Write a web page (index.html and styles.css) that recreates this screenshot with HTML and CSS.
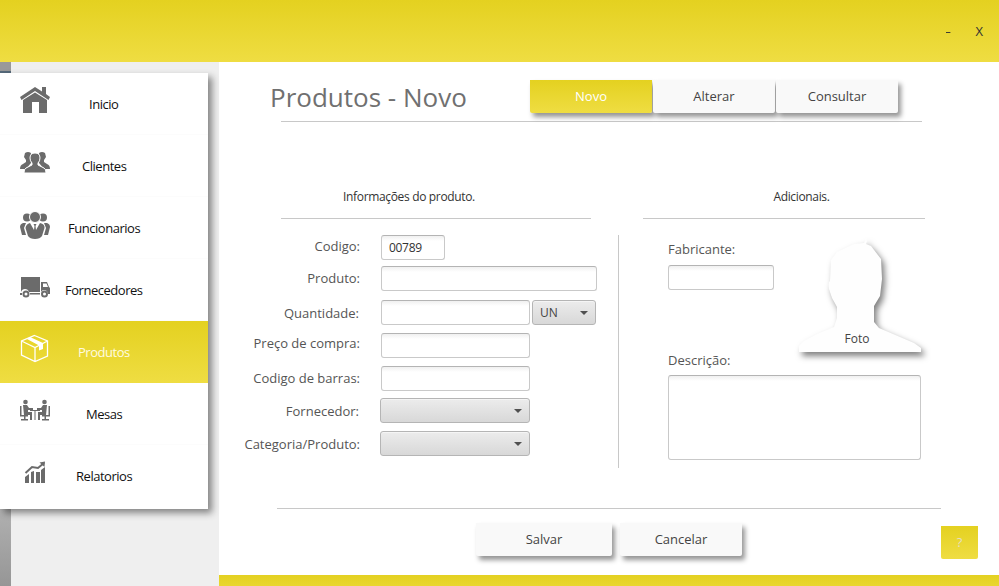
FILE: index.html
```
<!DOCTYPE html>
<html lang="pt-BR">
<head>
<meta charset="utf-8">
<title>Produtos - Novo</title>
<link rel="stylesheet" href="styles.css">
</head>
<body>
<header class="titlebar"><span class="minimize">-</span><span class="close">X</span></header>
<div class="body">
  <aside class="sidebar">
    <nav class="menu">
      <a class="item"><svg class="icon" viewBox="0 0 30 30"><path d="M0 11L15 1L22 5.500V1h4v7l4 3-1.500 3L15 5 1.500 14z"/><path d="M3 14L15 6.500 27 14v13h-8V16h-7v11H3z"/></svg><span class="name t-inicio">Inicio</span></a>
      <a class="item"><svg class="icon" viewBox="0 0 30 30"><path d="M5 4q3-2 6 0l-.5 5 .5 5-5 6H0q0-4 3-5l3-2v-2l-2-3zM25 4q-3-2-6 0l.5 5-.5 5 5 6h6q0-4-3-5l-3-2v-2l2-3z"/><path class="cut" d="M15 4q5 0 5 5 0 3-2 5v2l6 3q2 1 2 5H4q0-4 2-5l6-3v-2q-2-2-2-5 0-5 5-5z"/></svg><span class="name t-clientes">Clientes</span></a>
      <a class="item"><svg class="icon" viewBox="0 0 30 30"><circle cx="7" cy="6.500" r="4"/><circle cx="23" cy="6.500" r="4"/><path d="M3 12q-3 1-3 4l2 8h4l-2-7 2-5zM27 12q3 1 3 4l-2 8h-4l2-7-2-5z"/><circle class="cut" cx="15" cy="6" r="5.500"/><path d="M10 12l4 7 .5-4-1-2h3l-1 2 .5 4 4-7q5 1 4.500 5L22 25q-2 3-7 3t-7-3l-2.500-8Q6 13 10 12z"/></svg><span class="name t-funcionarios">Funcionarios</span></a>
      <a class="item"><svg class="icon" viewBox="0 0 30 30"><path d="M1 4h19v15H9q-1-3-4-3t-4 3z"/><path fill-rule="evenodd" d="M21 9h6l2 5 1 1v6h-2q-.5-4-4-4-2 0-3 2zM23 10.500V14h5l-1.500-3.500z"/><path fill-rule="evenodd" d="M6 17.500a3.500 3.500 0 1 1 0 7 3.500 3.500 0 0 1 0-7m0 2a1.500 1.500 0 1 0 0 3 1.500 1.500 0 0 0 0-3M24.500 17.500a3.500 3.500 0 1 1 0 7 3.500 3.500 0 0 1 0-7m0 2a1.500 1.500 0 1 0 0 3 1.500 1.500 0 0 0 0-3M0 20h2v2H0zM10 20h10v1.500H10z"/></svg><span class="name t-fornecedores">Fornecedores</span></a>
      <a class="item active"><svg class="icon" viewBox="0 0 30 30"><path class="line" d="M14.500 1.500L27.500 7v15L15 27.500 1.500 21V7zM1.500 7L15 13.500 27.500 7M15 13.500v14"/><path d="M7 5l3-2 13 6v6l-4 1.500v-5z"/></svg><span class="name t-produtos">Produtos</span></a>
      <a class="item"><svg class="icon" viewBox="0 0 30 30"><circle cx="5.500" cy="5" r="2.300"/><circle cx="24.500" cy="5" r="2.300"/><path d="M3 8h4l2 3h4v2H8v2h4v8h-2v-5H4zM27 8h-4l-2 3h-4v2h5v2h-4v8h2v-5h6zM0 9h1.500v9H8v1.500H5.500V22H8v1.500H1V22h3v-2.500H0zM30 9h-1.500v9H22v1.500h2.500V22H22v1.500h7V22h-3v-2.500h4zM10 13h10v1h-4.500v9h-1v-9H10z"/></svg><span class="name t-mesas">Mesas</span></a>
      <a class="item"><svg class="icon" viewBox="0 0 30 30"><path d="M5 18l4-3v9H5zM11 13l3-1v12h-3zM16 13h4v11h-4zM21 11l4-3v16h-4z"/><path class="line thick" d="M5.500 14L12 8l6 1 6-5"/><path d="M19.500 3.500L25 2.500 24.500 8z"/></svg><span class="name t-relatorios">Relatorios</span></a>
    </nav>
  </aside>
  <main class="main">
    <div class="heading">
      <h1 class="title">Produtos - Novo</h1>
      <div class="tabs"><button class="btn tab selected">Novo</button><button class="btn tab">Alterar</button><button class="btn tab">Consultar</button></div>
    </div>
    <div class="content">
      <section class="info">
        <h2 class="caption"><span class="t-info">Informações do produto.</span></h2>
        <div class="fields">
          <div class="row r-codigo"><label class="label">Codigo:</label><div class="input code">00789</div></div>
          <div class="row r-produto"><label class="label">Produto:</label><div class="input wide"></div></div>
          <div class="row r-quantidade"><label class="label">Quantidade:</label><div class="input"></div><div class="combo unit">UN</div></div>
          <div class="row r-preco"><label class="label">Preço de compra:</label><div class="input"></div></div>
          <div class="row r-barras"><label class="label">Codigo de barras:</label><div class="input"></div></div>
          <div class="row r-fornecedor"><label class="label">Fornecedor:</label><div class="combo"></div></div>
          <div class="row r-categoria"><label class="label">Categoria/Produto:</label><div class="combo"></div></div>
        </div>
      </section>
      <div class="divider"></div>
      <section class="extra">
        <h2 class="caption"><span class="t-extra">Adicionais.</span></h2>
        <div class="maker">
          <div class="maker-field"><label class="label t-fabricante">Fabricante:</label><div class="input"></div></div>
          <div class="photo">
            <svg class="silhouette" viewBox="0 0 124 116"><path d="M69 0L67 4l-10 1-17 8-6 8-1 21q-2 1-1 8l3 9 5 9v11l-3 9-17 7-13 7-5 5v6h122v-4l-7-5-35-15-5-6V67l6-10 2-17-1-20-10-13-5-2 1-3z"/></svg>
            <span class="photo-text">Foto</span>
          </div>
        </div>
        <label class="label t-descricao">Descrição:</label>
        <div class="input area"></div>
      </section>
    </div>
    <div class="actions"><button class="btn save">Salvar</button><button class="btn cancel">Cancelar</button><button class="btn help">?</button></div>
    <footer class="footer"></footer>
  </main>
</div>
</body>
</html>
```
FILE: styles.css
```
* { box-sizing: border-box; }
body { margin: 0; width: 999px; height: 586px; overflow: hidden; font-family: "Open Sans", "Noto Sans", sans-serif; color: #444; background: #fff; }
.titlebar { height: 62px; background: linear-gradient(#e4d120, #efdd42); display: flex; justify-content: flex-end; padding: 22px 16px 0 0; gap: 25px; font-size: 13px; line-height: 19px; color: #333; }
.minimize { transform: scaleX(1.4); }
.body { display: flex; height: 524px; }
.sidebar { width: 219px; padding-top: 11px; background: linear-gradient(#999 0 9px, #55697a 9px 11px, #999 11px, #b0b0b0 448px, #969696) 0 0 / 11px 100% no-repeat #efefef; }
.menu { width: 208px; height: 436px; background: #fff; box-shadow: 4px 4px 7px rgba(0,0,0,.45); }
.item { display: flex; height: 62px; padding: 12px 0 0 20px; color: #111; fill: #6b6b6b; border-bottom: 1px solid #fcfcfc; font-size: 13px; line-height: 20px; letter-spacing: -.47px; }
.item:last-child { border: 0; }
.icon { width: 30px; height: 30px; flex: none; margin-top: 2px; }
.item:first-child .icon, .active .icon { margin-top: 1px; }
.cut { stroke: #fff; stroke-width: 1; }
.line { fill: none; stroke: #fff; stroke-width: 1.3; }
.thick { stroke: #6b6b6b; stroke-width: 2; }
.name { padding-top: 9px; white-space: nowrap; }
.active { background: linear-gradient(#e4d120, #efdd42); color: #fffbe0; fill: #fff; border: 0; }
.t-inicio { margin-left: 39px; }
.t-clientes { margin-left: 32px; }
.t-funcionarios { margin-left: 18px; }
.t-fornecedores { margin-left: 15px; }
.t-produtos { margin-left: 28px; }
.t-mesas { margin-left: 36px; }
.t-relatorios { margin-left: 26px; }
.main { flex: 1; display: flex; flex-direction: column; }
.heading { display: flex; justify-content: space-between; width: 641px; height: 60px; margin-left: 62px; padding: 18px 24px 0 0; border-bottom: 1px solid #c8c8c8; }
.title { margin: -1px 0 0 -11px; font-size: 26px; line-height: 36px; font-weight: 400; color: #707070; white-space: nowrap; }
.tabs { display: flex; gap: 1px; }
.btn { flex: none; height: 33px; padding: 0 0 1px; border: 0; border-radius: 0 0 2px 2px; background: #f9f9f9; box-shadow: 3px 4px 5px rgba(0,0,0,.42); font: 13px "Open Sans", sans-serif; color: #444; }
.tab { width: 122px; }
.selected, .help { background: linear-gradient(#e4d120, #efdd42); color: #fff; }
.content { display: flex; height: 386px; padding-top: 65px; }
.info { width: 399px; }
.caption { margin: 0; height: 32px; font-size: 12px; line-height: 20px; font-weight: 400; color: #333; border-bottom: 1px solid #c8c8c8; text-align: center; letter-spacing: -.34px; }
.info .caption { width: 310px; margin-left: 62px; padding-right: 54px; }
.extra .caption { padding-left: 35px; }
.fields { display: flex; flex-direction: column; padding-top: 16px; }
.row { display: flex; height: 25px; margin-bottom: 8px; }
.row .label { width: 141px; margin-right: 21px; text-align: right; }
.label { display: block; font-size: 13px; line-height: 20px; color: #555; white-space: nowrap; }
.r-codigo { margin-bottom: 6px; }
.r-produto { margin-bottom: 9px; }
.r-codigo .label { padding-top: 1px; }
.r-produto .label, .r-barras .label { padding-top: 2px; }
.r-quantidade .label, .r-fornecedor .label, .r-categoria .label { padding-top: 3px; }
.r-quantidade .label, .r-fornecedor .label { padding-right: 1px; }
.r-barras { margin-bottom: 7px; }
.row .combo:last-child:nth-child(2) { margin-left: -1px; }
.input { width: 149px; height: 25px; border: 1px solid #c9c9c9; border-top-color: #b4b4b4; border-radius: 3px; background: linear-gradient(#f0f0f0, #fff 5px); }
.code { width: 64px; padding-left: 7px; font-size: 12px; line-height: 23px; letter-spacing: -.3px; color: #333; }
.row .wide { width: 216px; }
.combo { width: 150px; height: 25px; border: 1px solid #b5b5b5; border-radius: 3px; background: linear-gradient(#ececec, #d8d8d8); box-shadow: inset 0 1px #f5f5f5; display: flex; align-items: center; justify-content: flex-end; padding-right: 7px; font-size: 12px; }
.combo::after { content: ""; border: 4px solid transparent; border-top: 4px solid #505050; border-bottom: 0; }
.unit { width: 64px; margin-left: 2px; padding-left: 7px; justify-content: space-between; }
.divider { width: 1px; height: 233px; margin-top: 48px; background: #c8c8c8; }
.extra { width: 282px; margin-left: 24px; }
.maker { display: flex; height: 131px; padding-top: 20px; }
.maker-field { width: 130px; margin-left: 25px; }
.maker-field .input { width: 106px; margin-top: 6px; }
.photo { display: grid; width: 124px; height: 116px; margin-left: -1px; }
.silhouette, .photo-text { grid-area: 1 / 1; }
.silhouette { width: 124px; height: 116px; overflow: visible; fill: #fefefe; filter: drop-shadow(3px 4px 3px rgba(0,0,0,.5)); }
.photo-text { z-index: 1; align-self: end; justify-self: center; font-size: 12px; line-height: 20px; margin-bottom: 6px; margin-right: 4px; color: #444; }
.t-descricao { margin-left: 25px; }
.area { width: 253px; height: 85px; margin: 5px 0 0 25px; }
.actions { display: flex; width: 664px; height: 67px; margin-left: 58px; padding-top: 14px; border-top: 1px solid #c8c8c8; }
.save { width: 136px; margin-left: 199px; }
.cancel { width: 122px; margin-left: 8px; }
.help { width: 37px; margin: 3px 0 0 199px; box-shadow: none; color: #e5dfc5; }
.footer { height: 11px; background: linear-gradient(#e4d120, #e9d631); }
```
